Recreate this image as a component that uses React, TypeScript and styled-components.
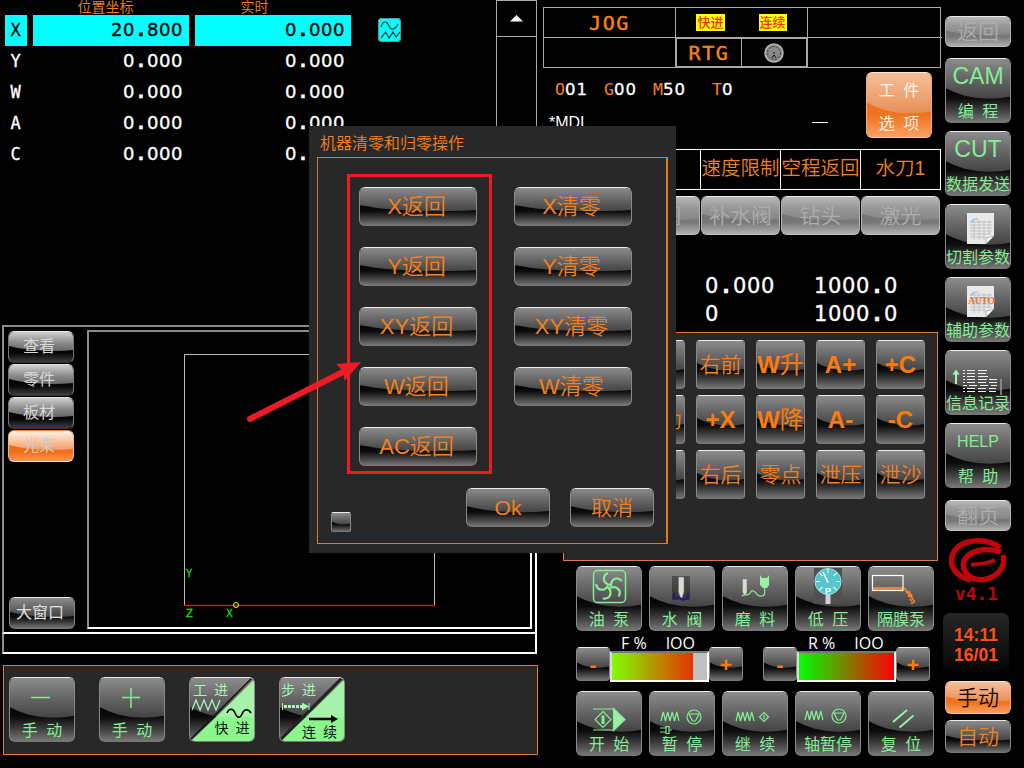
import React from "react";
import styled, { createGlobalStyle, css } from "styled-components";

const SANS = `"Liberation Sans", "Noto Sans CJK SC", sans-serif`;
const ORANGE = "#f5801c";
const GREEN = "#84ee94";

const Global = createGlobalStyle`
  * { box-sizing: border-box; }
  body { margin: 0; background: #000; font-family: ${SANS}; font-weight: 350; }
`;

/* ---------- glossy buttons ---------- */

type Tone = "dark" | "disabled" | "orange" | "tab" | "tabOn";

const tones: Record<Tone, { base: string; shine: string; edge: string; ink: string }> = {
  dark: {
    base: "linear-gradient(#1c1c1c 0%, #050505 50%, #0c0c0c 62%, #4a4a4a 84%, #7c7c7c 100%)",
    shine: "linear-gradient(#8c8c8c, #6a6a6a 28%, #444 62%)",
    edge: "#ececec #8a8a8a #777 #8a8a8a",
    ink: ORANGE,
  },
  disabled: {
    base: "linear-gradient(#747474 50%, #787878 68%, #b4b4b4 100%)",
    shine: "linear-gradient(#b8b8b8, #989898 28%, #868686 62%)",
    edge: "#e8e8e8 #b4b4b4 #c2c2c2 #b4b4b4",
    ink: "#adadad",
  },
  orange: {
    base: "linear-gradient(#ee701c 50%, #f07420 66%, #f9a468 100%)",
    shine: "linear-gradient(#f6bf98, #e88f58 62%)",
    edge: "#fbe6d6 #f0ac80 #f6c4a0 #f0ac80",
    ink: "#fff3e6",
  },
  tab: {
    base: "linear-gradient(#000 40%, #060606 68%, #444 100%)",
    shine: "linear-gradient(#d0d0d0, #8c8c8c 35%, #666 64%)",
    edge: "#e4e4e4 #777 #333 #777",
    ink: "#d8d8d8",
  },
  tabOn: {
    base: "linear-gradient(#ef6a12 40%, #f07018 70%, #fa9a54 100%)",
    shine: "linear-gradient(#fff2e8, #f8bd94 40%, #f29a62 64%)",
    edge: "#f08030 #f6b48c #fbe0cc #f6b48c",
    ink: "#cfcac4",
  },
};

const Button = styled.button<{ $tone?: Tone; $w: number; $h: number; $size?: number }>`
  position: relative;
  isolation: isolate;
  overflow: hidden;
  flex: none;
  display: flex;
  align-items: center;
  justify-content: center;
  width: ${(p) => p.$w}px;
  height: ${(p) => p.$h}px;
  padding: 0;
  border: 1px solid;
  border-radius: 6px;
  font-family: ${SANS};
  font-weight: 350;
  font-size: ${(p) => p.$size ?? 21}px;
  line-height: 1;
  white-space: nowrap;
  ${({ $tone = "dark" }) => css`
    background: ${tones[$tone].base};
    background-origin: border-box;
    border-color: ${tones[$tone].edge};
    color: ${tones[$tone].ink};
    &::before {
      content: "";
      position: absolute;
      inset: 0;
      z-index: -1;
      background: ${tones[$tone].shine};
      clip-path: ellipse(101% 63% at 68% 0);
    }
  `}
`;

const TabButton = styled(Button).attrs({ $w: 66, $h: 32, $size: 16 })`
  padding-right: 4px;
  font-weight: 400;
`;

const WideTabButton = styled(TabButton)`
  margin-left: 1px;
  color: #e0e0e0;
`;

const RailButton = styled(Button)<{ $ink?: string; $before?: number; $after?: number }>`
  margin-top: ${(p) => p.$before ?? 0}px;
  margin-bottom: ${(p) => p.$after ?? 0}px;
  ${(p) => p.$ink && `color: ${p.$ink};`}
`;

const MiniButton = styled(Button).attrs({ $w: 20, $h: 20 })`
  margin: 24px 95px 0 0;
  border-radius: 2px;
`;

const TileButton = styled(Button).attrs({ $w: 66, $h: 65 })`
  flex-direction: column;
  justify-content: flex-start;
  color: ${GREEN};
`;

const TileLabel = styled.span`
  font-size: 16px;
  font-weight: 400;
  line-height: 18px;
  word-spacing: 4px;
`;

const TileHead = styled.span<{ $size: number }>`
  height: 44px;
  padding-top: 4px;
  font-size: ${(p) => p.$size}px;
  line-height: 27px;
`;

const TileArt = styled.svg.attrs({ viewBox: "0 0 64 44", width: 64, height: 44 })`
  flex: none;
  fill: none;
  stroke: ${GREEN};
  stroke-width: 1.2;
`;

/* ---------- page frame ---------- */

const Screen = styled.main`
  position: relative;
  display: grid;
  grid-template-columns: 538px 405px 81px;
  width: 1024px;
  height: 768px;
  overflow: hidden;
  background: #000;
  color: #fff;
`;

const Column = styled.section`
  display: flex;
  flex-direction: column;
  min-width: 0;
`;

/* ---------- LCD figures ---------- */

const Figures = styled.span<{ $size: number; $pitch: number }>`
  font-family: "DejaVu Sans", sans-serif;
  font-weight: 400;
  font-size: ${(p) => p.$size}px;
  line-height: 1;
  letter-spacing: ${(p) => p.$pitch - p.$size * 0.636}px;
  white-space: nowrap;
  -webkit-text-stroke: 0.35px currentColor;
`;

const Point = styled.span<{ $pitch: number }>`
  display: inline-block;
  width: ${(p) => p.$pitch}px;
  letter-spacing: 0;
  text-align: center;
  font-weight: 700;
`;

function Lcd({ value, size = 18, pitch = 12 }: { value: string; size?: number; pitch?: number }) {
  const [whole, decimals] = value.split(".");
  return (
    <Figures $size={size} $pitch={pitch}>
      {whole}
      {decimals !== undefined && <Point $pitch={pitch}>.</Point>}
      {decimals}
    </Figures>
  );
}

/* ---------- left: coordinates ---------- */

const Readout = styled.div`
  display: flex;
  height: 325px;
`;

const AxisTable = styled.div`
  display: grid;
  grid-template-columns: 22px 156px 156px;
  grid-template-rows: 15px;
  grid-auto-rows: 31px;
  column-gap: 6px;
  align-content: start;
  width: 351px;
  padding-left: 5px;
`;

const AxisHead = styled.div<{ $shift: number }>`
  padding-right: ${(p) => p.$shift}px;
  text-align: center;
  font-size: 14px;
  line-height: 14px;
  color: ${ORANGE};
`;

const AxisCell = styled.div<{ $on?: boolean; $name?: boolean }>`
  display: flex;
  align-items: center;
  justify-content: ${(p) => (p.$name ? "center" : "flex-end")};
  padding: 0 ${(p) => (p.$name ? 1 : 6)}px ${(p) => (p.$name ? 0 : 2)}px 0;
  background: ${(p) => (p.$on ? "#0ff" : "transparent")};
  color: ${(p) => (p.$on ? "#000" : "#fff")};
  font: 400 17px/1 "DejaVu Sans Mono", monospace;
  -webkit-text-stroke: 0.3px currentColor;
`;

const WaveBadge = styled.svg`
  margin: 18px 0 0 27px;
`;

const Scroller = styled.div`
  width: 41px;
  height: 100%;
  margin-left: auto;
  margin-right: 1px;
  border: 1px solid #a8a8a8;
`;

const ScrollUp = styled.div`
  display: flex;
  align-items: center;
  justify-content: center;
  height: 36px;
  border-bottom: 1px solid #a8a8a8;
`;

/* ---------- left: work view ---------- */

const ViewWindow = styled.div`
  display: flex;
  width: 535px;
  height: 309px;
  margin-left: 2px;
  border: 2px solid;
  border-color: #8c8c8c #fff #fff #8c8c8c;
`;

const ViewTabs = styled.div`
  display: flex;
  flex-direction: column;
  gap: 1px;
  width: 83px;
  padding: 4px 0 3px 4px;
`;

const Spacer = styled.div`
  flex: 1;
`;

const Canvas = styled.div`
  width: 445px;
  height: 299px;
  margin-top: 3px;
  border: 2px solid;
  border-color: #8c8c8c #fff #fff #8c8c8c;
  font-family: "DejaVu Sans", sans-serif;
`;

const MessageBar = styled.div`
  width: 535px;
  height: 20px;
  margin-left: 2px;
  border: 2px solid #fff;
  border-left-color: #8c8c8c;
  border-top: 0;
`;

const JogBar = styled.div`
  display: flex;
  gap: 24px;
  width: 535px;
  height: 90px;
  margin: 11px 0 0 3px;
  padding: 11px 5px;
  border: 1px solid #e07a34;
  background: #282828;
`;

const SplitArt = styled.svg`
  flex: none;
  margin: -1px;
  font-size: 14px;
  font-weight: 400;
  font-family: ${SANS};
  word-spacing: 3px;
`;

/* ---------- centre: status ---------- */

const StatusTable = styled.div`
  display: grid;
  grid-template-columns: 132px 132px 134px;
  grid-template-rows: 30px 29px;
  width: 398px;
  margin: 7px 0 0 5px;
  border: 1px solid #a8a8a8;
`;

const StatusCell = styled.div<{ $right?: boolean; $bottom?: boolean; $heavy?: boolean }>`
  display: flex;
  align-items: center;
  justify-content: center;
  gap: ${(p) => (p.$heavy ? 0 : 34)}px;
  border: 0 solid #a8a8a8;
  border-right-width: ${(p) => (p.$right ? 1 : 0)}px;
  border-bottom-width: ${(p) => (p.$bottom ? 1 : 0)}px;
  ${(p) => p.$heavy && "border-width: 1px 2px 1px 1px;"}
`;

const HalfCell = styled.div<{ $line?: boolean }>`
  display: flex;
  flex: 1;
  height: 100%;
  align-items: center;
  justify-content: center;
  border-right: ${(p) => (p.$line ? "1px solid #a8a8a8" : "0")};
`;

const ModeText = styled.span`
  font: 400 20px/1 "DejaVu Sans Mono", monospace;
  letter-spacing: 1.6px;
  color: #ff8210;
  -webkit-text-stroke: 0.4px currentColor;
`;

const YellowTag = styled.span`
  padding: 0 1px;
  background: #ff0;
  color: #f03000;
  font-size: 13px;
  font-weight: 500;
  line-height: 17px;
`;

const ProgramArea = styled.div`
  display: flex;
  height: 80px;
  padding: 4px 11px 0 11px;
`;

const ProgramText = styled.div`
  flex: 1;
`;

const CodeLine = styled.div`
  display: grid;
  grid-template-columns: 49px 49px 59px 40px;
  padding: 9px 0 0 6px;
`;

const Code = styled.div`
  font: 400 16.5px/17px "DejaVu Sans Mono", monospace;
  color: #ff8210;
  white-space: nowrap;
`;

const White = styled.span`
  color: #fff;
`;

const MdiLine = styled.div`
  display: flex;
  align-items: center;
  padding-top: 15px;
  font-size: 16px;
  font-weight: 400;
  line-height: 17px;
`;

const Cursor = styled.span`
  width: 16px;
  height: 1px;
  margin-left: 227px;
  background: #fff;
`;

const Stacked = styled.span`
  padding-top: 3px;
  font-size: 16px;
  font-weight: 400;
  line-height: 33px;
  word-spacing: 4px;
  white-space: pre-line;
`;

const OptionRow = styled.div`
  display: grid;
  grid-template-columns: repeat(5, 80px);
  width: 401px;
  height: 41px;
  margin: 1px 0 0 2px;
  border: 1px solid #fff;
  border-left: 0;
`;

const Option = styled.div`
  display: flex;
  align-items: center;
  justify-content: center;
  padding-bottom: 2px;
  border-left: 1px solid #fff;
  font-size: 19.5px;
  line-height: 1;
  white-space: nowrap;
  color: ${ORANGE};
`;

const ToolRow = styled.div`
  display: flex;
  gap: 1px;
  margin: 6px 0 0 3px;
`;

const Measures = styled.div`
  display: grid;
  grid-template-columns: 109px 90px;
  grid-auto-rows: 28px;
  height: 96px;
  padding: 41px 0 0 167px;
  line-height: 1;
`;

const JogPad = styled.div`
  display: grid;
  grid-template-columns: repeat(6, 49px);
  grid-auto-rows: 49px;
  gap: 6px 11px;
  width: 375px;
  height: 229px;
  margin: 1px 0 0 25px;
  padding: 7px 12px;
  border: 1px solid #e07a44;
  background: #282828;
`;

const JogKey = styled(Button).attrs({ $w: 49, $h: 49 })<{ $bold?: boolean }>`
  border-radius: 4px;
  font-size: ${(p) => (p.$bold ? 24 : 21)}px;
  font-weight: ${(p) => (p.$bold ? 700 : 350)};
  color: ${(p) => (p.$bold ? "#ff7a0a" : ORANGE)};
`;

const Thin = styled.span`
  font-weight: 400;
`;

const TileRow = styled.div<{ $top: number }>`
  display: flex;
  gap: 7px;
  margin: ${(p) => p.$top}px 0 0 38px;
`;

const Overrides = styled.div`
  display: flex;
  gap: 20px;
  height: 56px;
  padding: 4px 0 0 38px;
`;

const Override = styled.div`
  width: 167px;
`;

const OverrideLabel = styled.div`
  display: flex;
  gap: 19px;
  padding-left: 45px;
  font: 400 16px/16px "Open Sans", sans-serif;
`;

const OverrideRow = styled.div`
  display: flex;
  align-items: center;
  height: 35px;
  margin-top: -5px;
`;

const StepKey = styled(Button).attrs({ $w: 34, $h: 34 })`
  border-radius: 4px;
  padding-top: 2px;
  font-size: 21px;
  font-weight: 700;
  color: #ff7a0a;
`;

const Track = styled.div`
  width: 99px;
  height: 31px;
  margin-top: 5px;
  border: 2px solid;
  border-color: #777 #fff #fff #ddd;
  background: #c0c0c0;
`;

const Level = styled.div<{ $from: string; $to: string; $pct: number }>`
  width: ${(p) => p.$pct}%;
  height: 100%;
  background: linear-gradient(90deg, ${(p) => p.$from}, ${(p) => p.$to});
`;

/* ---------- right rail ---------- */

const Rail = styled(Column)`
  gap: 8px;
  padding: 16px 0 0 2px;
`;

const Clock = styled.div`
  display: flex;
  flex-direction: column;
  align-items: center;
  width: 66px;
  height: 61px;
  margin: 1px 0 -1px -2px;
  padding-top: 12px;
  border-radius: 7px;
  background: linear-gradient(#262626, #101010 70%, #000);
  color: #ff5012;
  font-size: 17.5px;
  font-weight: 700;
  line-height: 20px;
`;

const Brand = styled.div`
  display: flex;
  flex-direction: column;
  align-items: center;
  width: 66px;
  height: 66px;
  margin-top: -1px;
`;

const Version = styled.span`
  padding-right: 3px;
  color: #b4060c;
  font: 700 18px/20px "DejaVu Sans Mono", monospace;
`;

/* ---------- dialog ---------- */

const Dialog = styled.section`
  position: absolute;
  left: 309px;
  top: 126px;
  width: 367px;
  height: 427px;
  padding: 8px 8px 9px;
  display: flex;
  flex-direction: column;
  background: #282828;
`;

const DialogTitle = styled.h1`
  margin: 0 0 0 3px;
  height: 23px;
  font-size: 16px;
  font-weight: 350;
  line-height: 19px;
  color: ${ORANGE};
`;

const DialogBody = styled.div`
  flex: 1;
  display: flex;
  flex-direction: column;
  border: 1px solid #e07a1e;
  border-right-width: 2px;
`;

const ActionColumns = styled.div`
  display: flex;
  gap: 22px;
  padding: 16px 0 0 29px;
`;

const ActionColumn = styled.div<{ $marked?: boolean }>`
  display: flex;
  flex-direction: column;
  gap: 21px;
  height: 300px;
  width: 145px;
  padding: 10px 0 0 ${(p) => (p.$marked ? 9 : 0)}px;
  border: 3px solid ${(p) => (p.$marked ? "#ed1c24" : "transparent")};
  border-left-width: ${(p) => (p.$marked ? 3 : 0)}px;
`;

const ActionButton = styled(Button).attrs({ $w: 118, $h: 39, $size: 22 })`
  padding-right: 3px;
`;

const DialogFooter = styled.div`
  display: flex;
  gap: 20px;
  padding: 14px 0 0 13px;
`;

const Arrow = styled.svg`
  position: absolute;
  left: 240px;
  top: 355px;
`;

/* ---------- drawings ---------- */

const zig = (x: number, y: number, w: number, h: number, n: number) =>
  Array.from({ length: n + 1 }, (_, i) => `${i ? "L" : "M"}${x + (w * i) / n} ${y + (i % 2 ? 0 : h)}`).join("");

const StopMark = ({ x, y }: { x: number; y: number }) => (
  <g transform={`translate(${x} ${y})`}>
    <circle r="7" />
    <path d="M-5 -3H5L1.5 4H-1.5Z" />
  </g>
);

const Sheet = ({ auto }: { auto?: boolean }) => (
  <TileArt>
    <path d="M21 8H48V31L40 39H21Z" fill="#e9e9e9" stroke="none" />
    <path d="M40 39V33L48 31Z" fill="#fff" stroke="#888" strokeWidth=".6" />
    <path d="M24 17H46M24 20H46M24 23H46M24 26H46M24 29H45M24 32H40M28 15V35M33 15V35M38 15V35M43 15V30" stroke="#b5b5b5" strokeWidth=".7" />
    <path d="M25 18C26 14 29 14 32 14" stroke="#a9c4ee" strokeWidth="1.6" />
    {auto && (
      <text x="22" y="26" textLength="27" fontFamily="Liberation Serif" fontWeight="700" fontSize="10" fill="#f07030" stroke="none">AUTO</text>
    )}
  </TileArt>
);

const LogArt = () => (
  <TileArt>
    <path d="M10 33V21" stroke="#a6f5b4" strokeWidth="2" />
    <path d="M6.5 23.5L10 18.5L13.5 23.5Z" fill="#a6f5b4" stroke="none" />
    <path d="M17 19.5h2m2 0h8m3 0h9M17 22.5h2m2 0h8m3 0h8M17 25.5h2m2 0h8m3 0h10M17 28.5h2m2 0h8m3 0h9m2 0h8M17 31.5h2m2 0h8m3 0h8m3 0h8M17 34.5h4m2 0h8m3 0h8m3 0h6M17 37.5h2m2 0h8m3 0h8m3 0h7M17 40.5h2m2 0h8m3 0h8m3 0h7" stroke="#f0f0f0" strokeWidth="1" />
    <path d="M55 28V44" stroke="#999" strokeWidth="1.5" />
  </TileArt>
);

const PumpArt = () => (
  <TileArt>
    <rect x="16.5" y="3.5" width="32" height="32" rx="4" strokeWidth="1.5" />
    {[0, 72, 144, 216, 288].map((a) => (
      <path key={a} transform={`rotate(${a} 32.5 19.5)`} d="M33 18C26 16.5 24.5 9 31 6" strokeWidth="2.2" />
    ))}
  </TileArt>
);

const WaterArt = () => (
  <TileArt>
    <rect x="22" y="9" width="18" height="24" fill="#000" opacity=".35" stroke="none" />
    <path d="M28.5 10H34V25L32 31H30.5L28.5 25Z" fill="#d8dcd2" stroke="#777" strokeWidth=".6" />
    <path d="M24 26V32M26 31Q29 29 31 32T38 30M38 26V31" stroke="#14149c" strokeWidth="1.4" />
  </TileArt>
);

const AbrasiveArt = () => (
  <TileArt>
    <path d="M19.5 12H24V25L22.5 28H21L19.5 25Z" fill="#d8dcd2" stroke="#777" strokeWidth=".5" />
    <path d="M19 29C22 26 25 30 27 26S31 24 33 26C36 31 41 29 41.5 27C42 24 41.5 23 41.5 20" />
    <path d="M37 8V18L40 21H44L46 18V8L44 11H39Z" fill="#9af0a4" stroke="none" />
  </TileArt>
);

const GaugeArt = () => (
  <TileArt>
    <rect x="18" y="1" width="28" height="36" fill="#505050" stroke="none" />
    <rect x="29.5" y="27" width="5" height="10" fill="#cfcfcf" stroke="none" />
    <circle cx="32" cy="14.5" r="13" fill="#55c6cc" stroke="#a8dede" strokeWidth="1" />
    <path d="M32 2v4M20 14.5h4M40 14.5h4M23.5 23l3-3M40.5 23l-3-3M40.5 6l-3 3M23.5 6l3 3" stroke="#d6f6f6" strokeWidth="1.2" />
    <path d="M32 15.5L27 5" stroke="#fff" strokeWidth="1.6" />
    <text x="29" y="26.5" fontFamily="Liberation Sans" fontWeight="700" fontSize="9" fill="#fff" stroke="none">P</text>
  </TileArt>
);

const DiaphragmArt = () => (
  <TileArt>
    <rect x="3" y="20" width="31" height="4" fill="#f58030" stroke="none" />
    <rect x="3.5" y="8.5" width="30.5" height="15" stroke="#fff" />
    <path d="M35 21l2 2M37 23l1.500 3M39.500 24l2 3M39 28l2 2M42 27l1 3M43 31l1.500 2M41 32l1.500 2M45 33v3M43.500 35l-1 2M36 22l3 5M40 26l3 5" stroke="#f58030" strokeWidth="1.8" />
  </TileArt>
);

const StartArt = () => (
  <TileArt>
    <path d="M16 17H37M16 38H37" />
    <path d="M36.5 16.5L48 27.5L36.5 38.5Z" fill="#9af0a4" />
    <path d="M26 19.5L34 27.5L26 35.5L18 27.5Z" />
    <rect x="24.5" y="23.5" width="3" height="8.5" fill={GREEN} stroke="none" />
  </TileArt>
);

const PauseArt = () => (
  <TileArt>
    <path d={zig(11, 20, 18, 9, 8)} />
    <StopMark x={44} y={25} />
    <path d="M10 36H16M10 40H16M16 34.5H19V41.5H16ZM19 38H22" />
  </TileArt>
);

const ResumeArt = () => (
  <TileArt>
    <path d={zig(13, 20, 18, 9, 8)} />
    <path d="M41 20.5L45.5 25L41 29.5L36.5 25Z M41 23V27" />
  </TileArt>
);

const AxisPauseArt = () => (
  <TileArt>
    <path d={zig(9, 19, 18, 9, 8)} />
    <StopMark x={43} y={24} />
  </TileArt>
);

const ResetArt = () => (
  <TileArt>
    <path d="M24 30L38 18M30.5 35.5L44.5 23.5" stroke="#9af0a4" strokeWidth="2" />
  </TileArt>
);

function Split({ top, bottom, step }: { top: string; bottom: string; step?: boolean }) {
  return (
    <SplitArt width="66" height="65" viewBox="0 0 66 65">
      <path d="M66 2V65H1Z" fill="#8cf68c" />
      <path d="M66 2V40H28Z" fill="#a6f2aa" />
      <path d="M64 0L0 64" stroke={step ? "#222" : "#111"} strokeWidth={step ? 3 : 1.5} />
      <text x={step ? 2 : 4} y="18" fill="#a6f5b4">{top}</text>
      <text x={step ? 23 : 25.5} y={step ? 60 : 56} fill="#06150a">{bottom}</text>
      {step ? (
        <g>
          <path d="M3.5 26V33M30 26V33" stroke="#a6f5b4" />
          <path d="M5 29.5H24" stroke="#a6f5b4" strokeWidth="3" strokeDasharray="3 1" />
          <path d="M23 25.5L30 29.5L23 33.5Z" fill="#a6f5b4" />
          <path d="M30 42H54" stroke="#000" strokeWidth="2.5" />
          <path d="M52 38L59 42L52 46Z" fill="#000" />
        </g>
      ) : (
        <g fill="none" strokeWidth="1.3">
          <path d={zig(3, 23, 28, 10, 7)} stroke="#a6f5b4" />
          <path d="M38 36C40 31 44 31 46 36S51 42 53 37S59 31 62 36" stroke="#000" strokeWidth="1.5" />
        </g>
      )}
    </SplitArt>
  );
}

/* ---------- data ---------- */

const axes = [
  ["X", "20.800", "0.000"],
  ["Y", "0.000", "0.000"],
  ["W", "0.000", "0.000"],
  ["A", "0.000", "0.000"],
  ["C", "0.000", "0.000"],
];

const jogKeys: { text: string; thin?: string; bold?: boolean }[] = [
  { text: "左前" }, { text: "Y+", bold: true }, { text: "右前" }, { text: "W", thin: "升", bold: true }, { text: "A+", bold: true }, { text: "+C", bold: true },
  { text: "-X", bold: true }, { text: "手动" }, { text: "+X", bold: true }, { text: "W", thin: "降", bold: true }, { text: "A-", bold: true }, { text: "-C", bold: true },
  { text: "左后" }, { text: "Y-", bold: true }, { text: "右后" }, { text: "零点" }, { text: "泄压" }, { text: "泄沙" },
];

const upperTiles: [string, React.FC][] = [
  ["油 泵", PumpArt], ["水 阀", WaterArt], ["磨 料", AbrasiveArt], ["低 压", GaugeArt], ["隔膜泵", DiaphragmArt],
];
const lowerTiles: [string, React.FC][] = [
  ["开 始", StartArt], ["暂 停", PauseArt], ["继 续", ResumeArt], ["轴暂停", AxisPauseArt], ["复 位", ResetArt],
];

/* ---------- app ---------- */

export default function App() {
  return (
    <>
      <Global />
      <Screen>
        <Column>
          <Readout>
            <AxisTable>
              <span />
              <AxisHead $shift={11}>位置坐标</AxisHead>
              <AxisHead $shift={37}>实时</AxisHead>
              {axes.map(([name, pos, live], i) => (
                <React.Fragment key={name}>
                  <AxisCell $on={i === 0} $name>{name}</AxisCell>
                  <AxisCell $on={i === 0}><Lcd value={pos} /></AxisCell>
                  <AxisCell $on={i === 0}><Lcd value={live} /></AxisCell>
                </React.Fragment>
              ))}
            </AxisTable>
            <WaveBadge width="23" height="24" viewBox="0 0 23 24" fill="none" stroke="#033" strokeWidth="1.2">
              <rect x=".5" y=".5" width="22" height="23" rx="3" fill="#0ff" stroke="#5a9a9a" />
              <path d="M3 9C5 2 9 3 11 8S17 12 20 6" />
              <path d="M3 20L7.5 14L11 20L15 14L18 19L22 14" />
            </WaveBadge>
            <Scroller>
              <ScrollUp>
                <svg width="13" height="7"><path d="M6.5 0L13 6.5H0Z" fill="#fff" /></svg>
              </ScrollUp>
            </Scroller>
          </Readout>
          <ViewWindow>
            <ViewTabs>
              <TabButton $tone="tab">查看</TabButton>
              <TabButton $tone="tab">零件</TabButton>
              <TabButton $tone="tab">板材</TabButton>
              <TabButton $tone="tabOn">光束</TabButton>
              <Spacer />
              <WideTabButton>大窗口</WideTabButton>
            </ViewTabs>
            <Canvas>
              <svg width="441" height="295" viewBox="89 332 441 295" fontSize="10" fill="#0f0">
                <path d="M184.5 605V354.5H434.5V605" fill="none" stroke="#bcbcbc" />
                <rect x="184" y="604.8" width="251" height="1.4" fill="#dc1414" />
                <circle cx="236" cy="605" r="2.5" fill="none" stroke="#ff0" />
                <g stroke="#0f0" strokeWidth=".4">
                  <text x="186" y="577">Y</text>
                  <text x="186" y="617">Z</text>
                  <text x="226" y="617">X</text>
                </g>
              </svg>
            </Canvas>
          </ViewWindow>
          <MessageBar />
          <JogBar>
            <TileButton>
              <TileArt><path d="M21 19.5H40" strokeWidth="1.5" /></TileArt>
              <TileLabel>手 动</TileLabel>
            </TileButton>
            <TileButton>
              <TileArt><path d="M22 19.5H40M31 10V30" strokeWidth="1.5" /></TileArt>
              <TileLabel>手 动</TileLabel>
            </TileButton>
            <TileButton><Split top="工 进" bottom="快 进" /></TileButton>
            <TileButton><Split top="步 进" bottom="连 续" step /></TileButton>
          </JogBar>
        </Column>

        <Column>
          <StatusTable>
            <StatusCell $right $bottom><ModeText>JOG</ModeText></StatusCell>
            <StatusCell $right $bottom><YellowTag>快进</YellowTag><YellowTag>连续</YellowTag></StatusCell>
            <StatusCell $bottom />
            <StatusCell $right />
            <StatusCell $heavy>
              <HalfCell $line><ModeText>RTG</ModeText></HalfCell>
              <HalfCell>
                <svg width="20" height="20" viewBox="-10 -10 20 20">
                  <circle r="9" fill="#8a8a8a" stroke="#b4b4b4" strokeWidth="1.5" />
                  <circle r="6.5" fill="none" stroke="#333" strokeDasharray="2 1.5" />
                  <path d="M-2 5L0 2L2 5M-1 0H1" stroke="#111" fill="none" />
                </svg>
              </HalfCell>
            </StatusCell>
            <StatusCell />
          </StatusTable>
          <ProgramArea>
            <ProgramText>
              <CodeLine>
                <Code>O<White><Lcd value="01" size={16.5} pitch={11.5} /></White></Code>
                <Code>G<White><Lcd value="00" size={16.5} pitch={11.5} /></White></Code>
                <Code>M<White><Lcd value="50" size={16.5} pitch={11.5} /></White></Code>
                <Code>T<White><Lcd value="0" size={16.5} pitch={11.5} /></White></Code>
              </CodeLine>
              <MdiLine>*MDI<Cursor /></MdiLine>
            </ProgramText>
            <Button $tone="orange" $w={66} $h={66}><Stacked>{"工 件\n选 项"}</Stacked></Button>
          </ProgramArea>
          <OptionRow>
            <Option />
            <Option />
            <Option>速度限制</Option>
            <Option>空程返回</Option>
            <Option>水刀1</Option>
          </OptionRow>
          <ToolRow>
            {["油泵", "水阀", "补水阀", "钻头", "激光"].map((t) => (
              <Button key={t} $tone="disabled" $w={79} $h={39}>{t}</Button>
            ))}
          </ToolRow>
          <Measures>
            <Lcd value="0.000" size={21} pitch={14} />
            <Lcd value="1000.0" size={21} pitch={14} />
            <Lcd value="0" size={21} pitch={14} />
            <Lcd value="1000.0" size={21} pitch={14} />
          </Measures>
          <JogPad>
            {jogKeys.map((k, i) => (
              <JogKey key={i} $bold={k.bold}>{k.text}{k.thin && <Thin>{k.thin}</Thin>}</JogKey>
            ))}
          </JogPad>
          <TileRow $top={5}>
            {upperTiles.map(([label, Art]) => (
              <TileButton key={label}><Art /><TileLabel>{label}</TileLabel></TileButton>
            ))}
          </TileRow>
          <Overrides>
            <Override>
              <OverrideLabel><span>F %</span><span>IOO</span></OverrideLabel>
              <OverrideRow>
                <StepKey>-</StepKey>
                <Track><Level $from="#80ff00" $to="#e63200" $pct={85} /></Track>
                <StepKey>+</StepKey>
              </OverrideRow>
            </Override>
            <Override>
              <OverrideLabel><span>R %</span><span>IOO</span></OverrideLabel>
              <OverrideRow>
                <StepKey>-</StepKey>
                <Track><Level $from="#00ff00" $to="#ff0000" $pct={100} /></Track>
                <StepKey>+</StepKey>
              </OverrideRow>
            </Override>
          </Overrides>
          <TileRow $top={4}>
            {lowerTiles.map(([label, Art]) => (
              <TileButton key={label}><Art /><TileLabel>{label}</TileLabel></TileButton>
            ))}
          </TileRow>
        </Column>

        <Rail>
          <RailButton $tone="disabled" $w={66} $h={31} $after={3}>返回</RailButton>
          <TileButton><TileHead $size={23}>CAM</TileHead><TileLabel>编 程</TileLabel></TileButton>
          <TileButton><TileHead $size={23}>CUT</TileHead><TileLabel>数据发送</TileLabel></TileButton>
          <TileButton><Sheet /><TileLabel>切割参数</TileLabel></TileButton>
          <TileButton><Sheet auto /><TileLabel>辅助参数</TileLabel></TileButton>
          <TileButton><LogArt /><TileLabel>信息记录</TileLabel></TileButton>
          <TileButton><TileHead $size={16}>HELP</TileHead><TileLabel>帮 助</TileLabel></TileButton>
          <RailButton $tone="disabled" $w={66} $h={31} $before={4}>翻页</RailButton>
          <Brand>
            <svg width="58" height="46" viewBox="0 0 58 46" fill="none" stroke="#bc060c">
              <path d="M51 10C42 1 16 -1 6 12C-2 24 4 38 22 42" strokeWidth="5.5" />
              <path d="M52 14C38 9 20 12 15 23C12 36 24 44 38 41C51 37 57 27 54 17" strokeWidth="5.5" />
              <path d="M22 27C30 25 36 27 46 22" strokeWidth="4" />
            </svg>
            <Version>v4.1</Version>
          </Brand>
          <Clock><span>14:11</span><span>16/01</span></Clock>
          <RailButton $tone="orange" $w={66} $h={33} $ink="#140800">手动</RailButton>
          <RailButton $w={66} $h={33} $before={-2}>自动</RailButton>
        </Rail>

        <Dialog>
          <DialogTitle>机器清零和归零操作</DialogTitle>
          <DialogBody>
            <ActionColumns>
              <ActionColumn $marked>
                {["X返回", "Y返回", "XY返回", "W返回", "AC返回"].map((t) => (
                  <ActionButton key={t}>{t}</ActionButton>
                ))}
              </ActionColumn>
              <ActionColumn>
                {["X清零", "Y清零", "XY清零", "W清零"].map((t) => (
                  <ActionButton key={t}>{t}</ActionButton>
                ))}
              </ActionColumn>
            </ActionColumns>
            <DialogFooter>
              <MiniButton />
              <Button $w={84} $h={39}>Ok</Button>
              <Button $w={84} $h={39}>取消</Button>
            </DialogFooter>
          </DialogBody>
        </Dialog>
        <Arrow width="125" height="70" viewBox="240 355 125 70">
          <path d="M250 419L345 371" stroke="#ed1c24" strokeWidth="6" strokeLinecap="round" />
          <path d="M361 362L344.5 381L343.5 371.5L336 364Z" fill="#ed1c24" />
        </Arrow>
      </Screen>
    </>
  );
}
